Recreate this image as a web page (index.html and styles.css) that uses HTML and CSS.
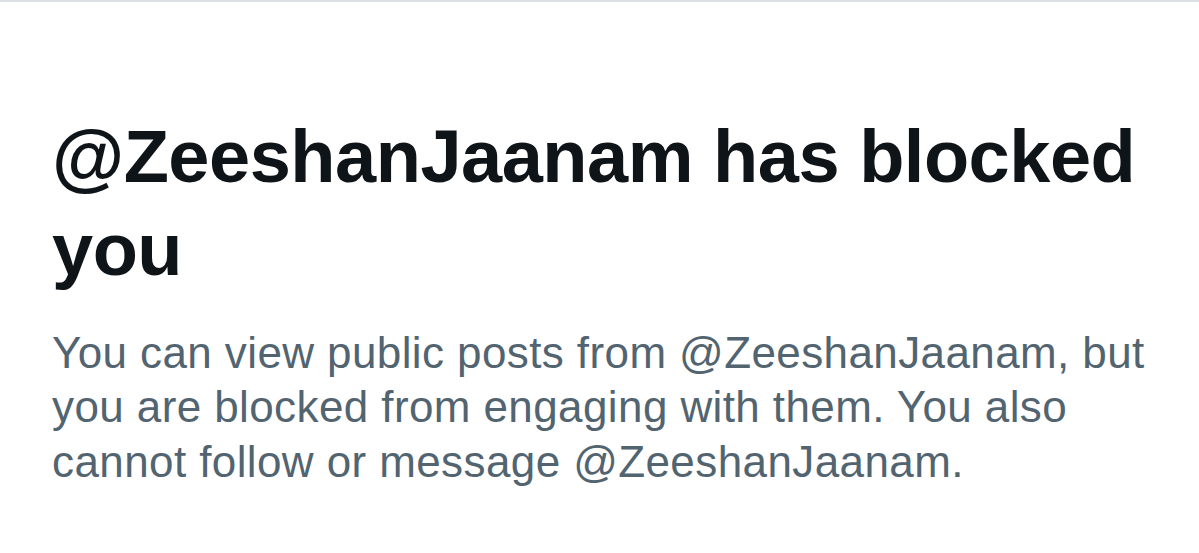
FILE: index.html
```html
<!DOCTYPE html>
<html>
<head>
<meta charset="utf-8">
<link rel="stylesheet" href="styles.css">
</head>
<body>
<div class="topline"></div>
<main class="content">
  <h1 class="title">@ZeeshanJaanam has blocked you</h1>
  <p class="desc">You can view public posts from @ZeeshanJaanam, but you are blocked from engaging with them. You also cannot follow or message @ZeeshanJaanam.</p>
</main>
</body>
</html>
```
FILE: styles.css
```css
html, body {
  margin: 0;
  padding: 0;
  background: #ffffff;
}
.topline {
  height: 2px;
  background: #dcdfe3;
}
.content {
  padding: 108px 20px 0 52px;
}
.title {
  margin: 0;
  font-family: "Liberation Sans", Arial, sans-serif;
  font-weight: 700;
  font-size: 74px;
  line-height: 93px;
  color: #0f1419;
  letter-spacing: -0.5px;
}
.desc {
  margin: 29.5px 0 0 0;
  font-family: "Liberation Sans", Arial, sans-serif;
  font-size: 44px;
  line-height: 54.5px;
  letter-spacing: 0.4px;
  color: #536471;
}
```
